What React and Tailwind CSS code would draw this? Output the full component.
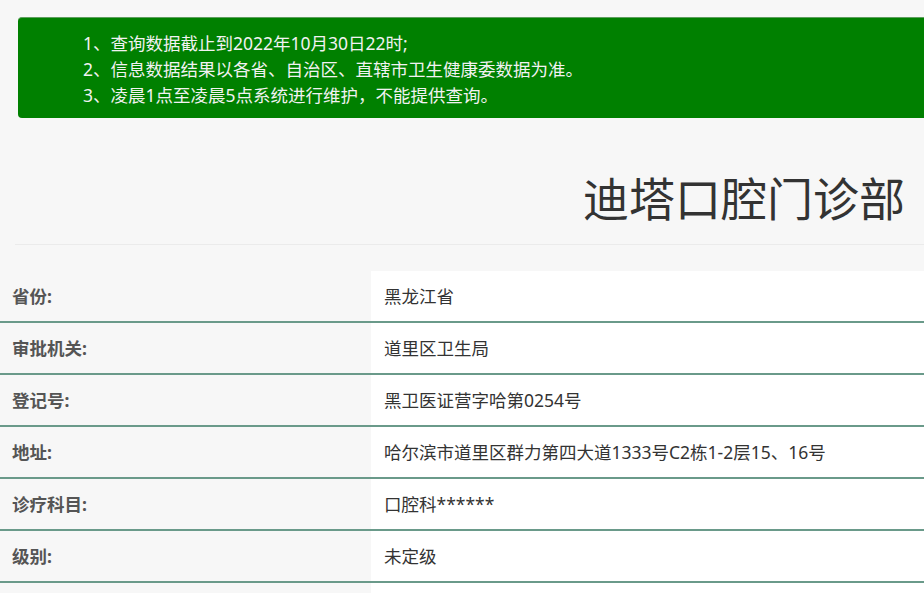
export default function App() {
  const rows = [
    ["省份:", "黑龙江省"],
    ["审批机关:", "道里区卫生局"],
    ["登记号:", "黑卫医证营字哈第0254号"],
    ["地址:", "哈尔滨市道里区群力第四大道1333号C2栋1-2层15、16号"],
    ["诊疗科目:", "口腔科******"],
    ["级别:", "未定级"],
    ["", ""],
  ];
  return (
    <div
      className="h-[593px] w-[924px] overflow-hidden bg-[#f7f7f7]"
      style={{ fontFamily: '"Noto Sans", "Noto Sans CJK SC", sans-serif' }}
    >
      <div className="pt-[17px] pl-[18px]">
        <div className="rounded-l-[4px] border-t border-[#5f9f5f] bg-[#008000] pt-[12px] pb-[10px] pl-[65px] text-[17.5px] leading-[26px] text-[#f2f2f2]">
          <div>1、查询数据截止到2022年10月30日22时;</div>
          <div>2、信息数据结果以各省、自治区、直辖市卫生健康委数据为准。</div>
          <div>3、凌晨1点至凌晨5点系统进行维护，不能提供查询。</div>
        </div>
      </div>
      <div className="flex h-[126px] items-center justify-end pr-[19px] pt-[34px] text-[46px] leading-none text-[#333333]">
        迪塔口腔门诊部
      </div>
      <div className="ml-[15px] h-[1px] bg-[#ebebeb]" />
      <div className="mt-[26px]">
        {rows.map(([k, v], i) => (
          <div key={i} className="flex h-[52px] border-b-2 border-[#6a9a8a]">
            <div className="flex w-[371px] items-center pl-[12px] text-[17.5px] font-bold text-[#555555]">
              {k}
            </div>
            <div className="flex flex-1 items-center bg-white pl-[13px] text-[17.5px] text-[#333333]">
              {v}
            </div>
          </div>
        ))}
      </div>
    </div>
  );
}
